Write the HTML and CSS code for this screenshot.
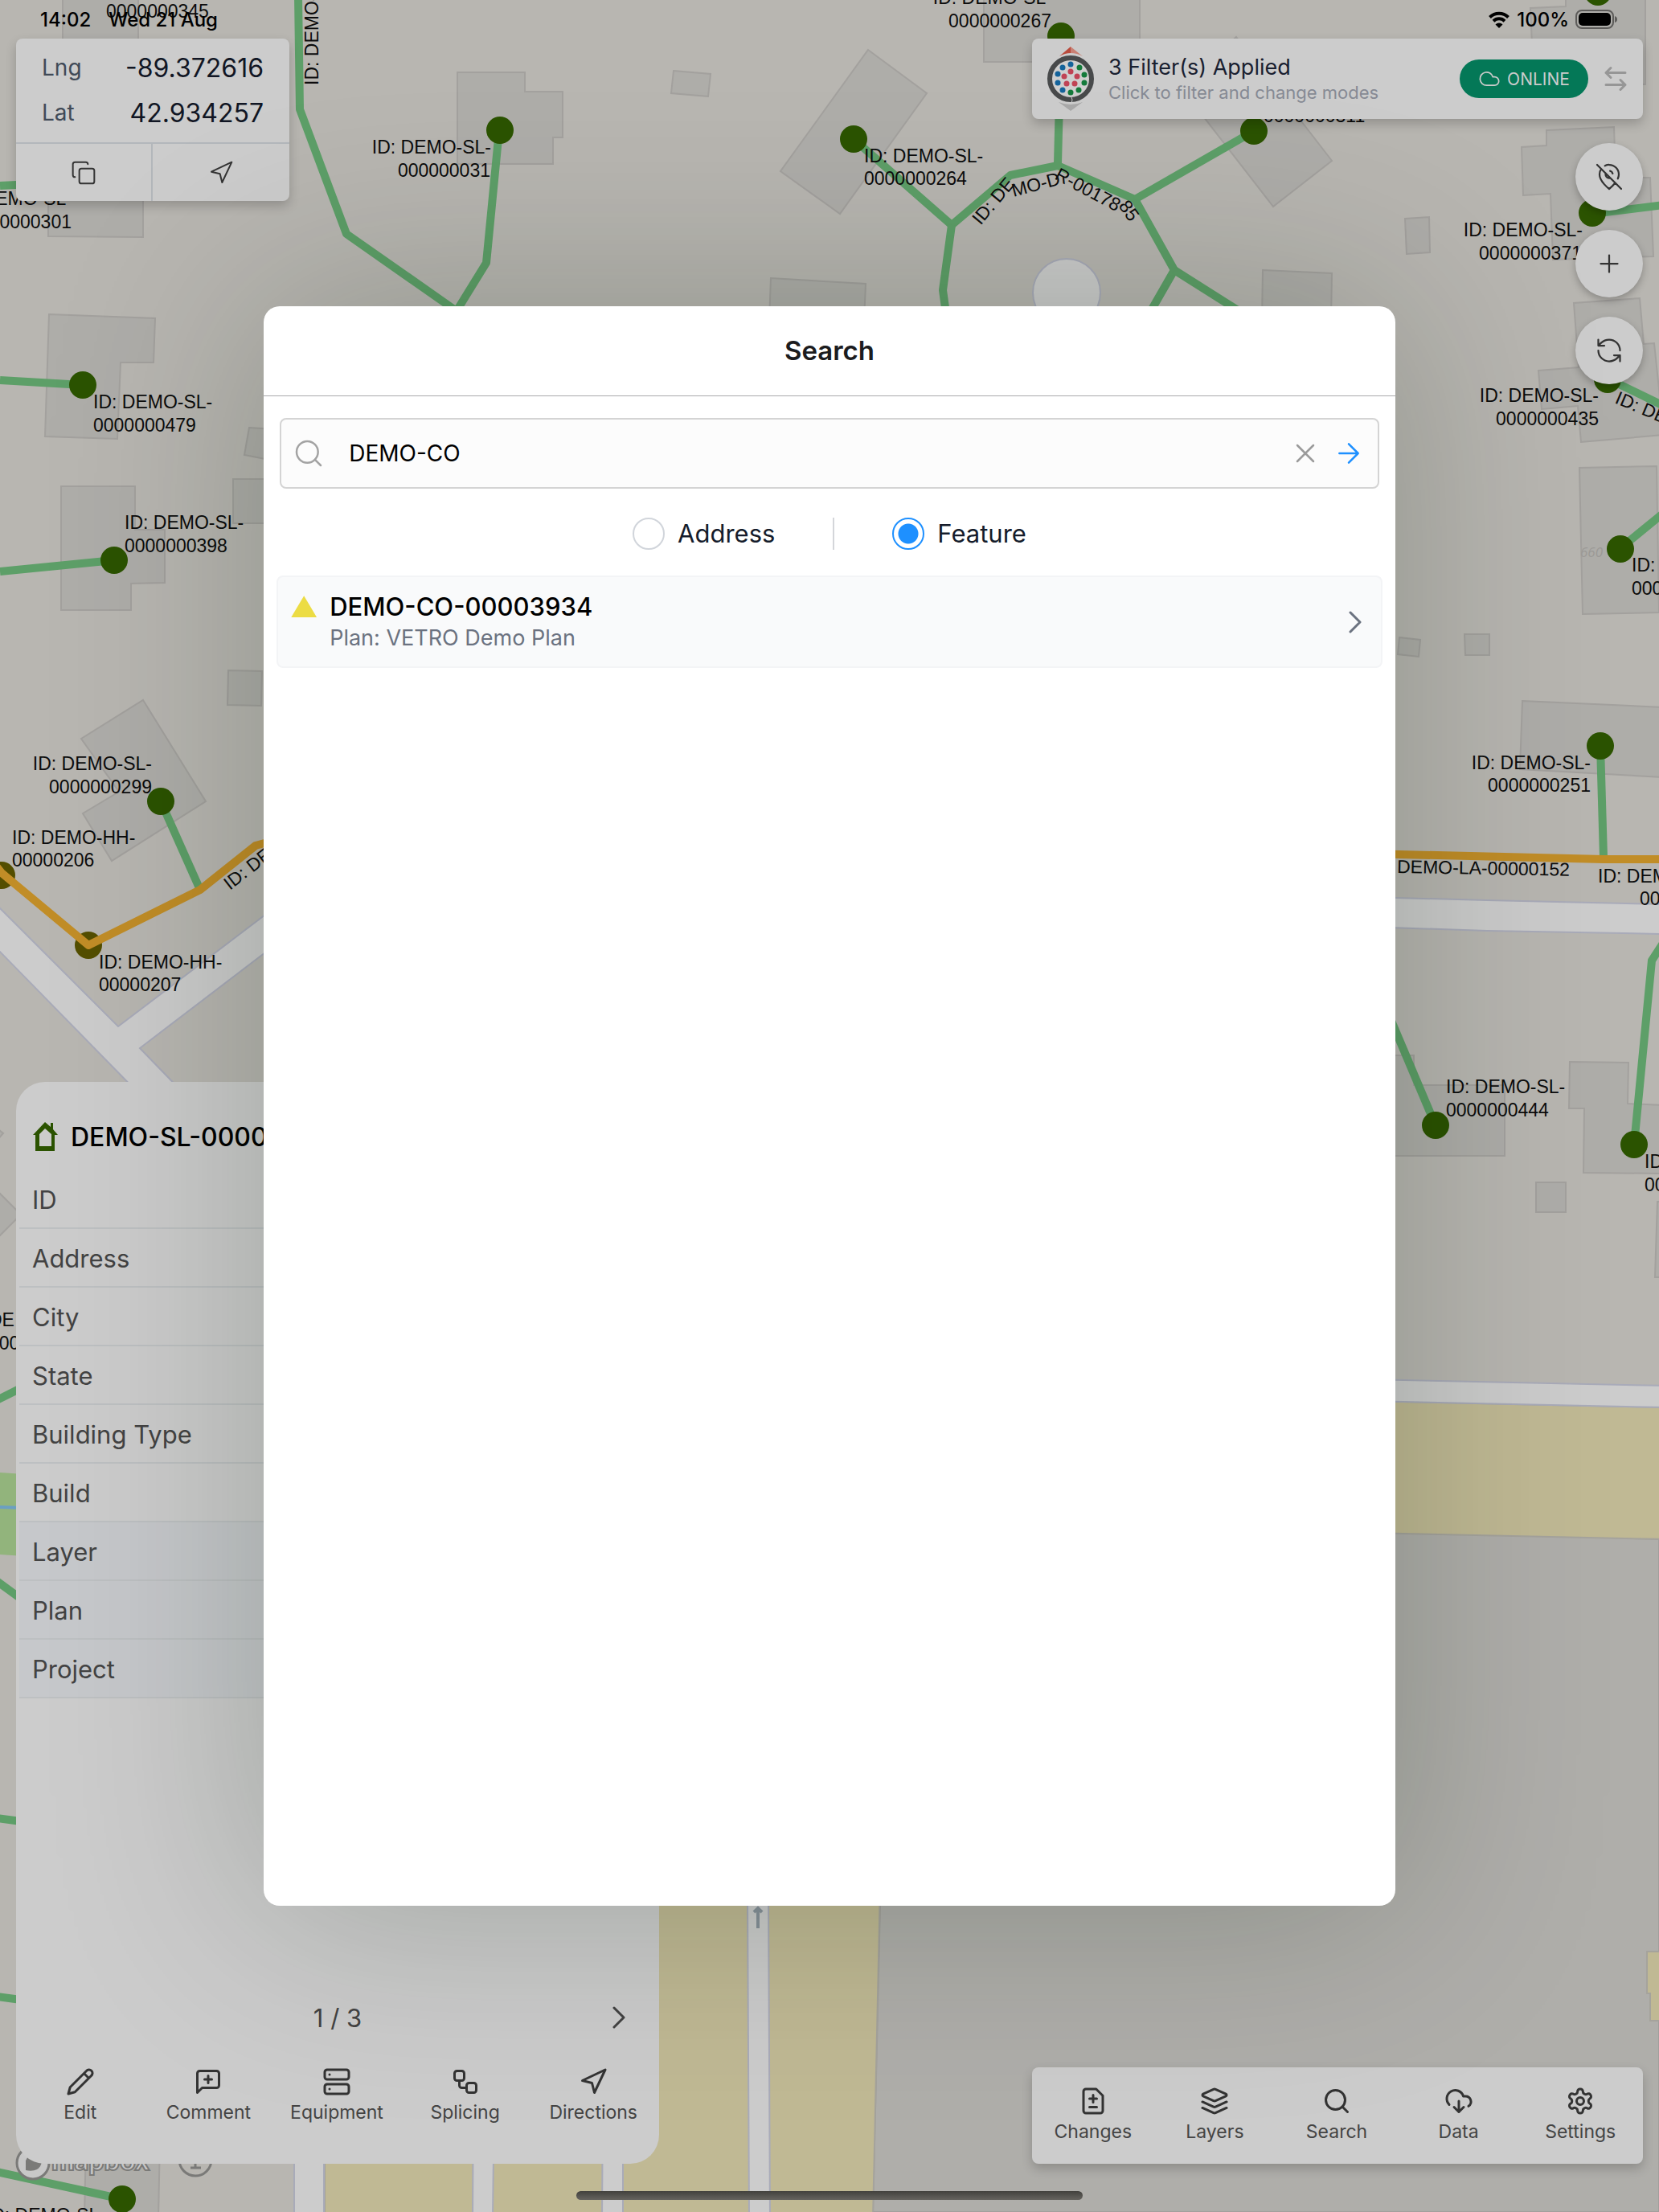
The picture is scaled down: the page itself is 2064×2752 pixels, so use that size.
FILE: index.html
```html
<!DOCTYPE html>
<html lang="en">
<head>
<meta charset="utf-8">
<meta name="viewport" content="width=device-width, initial-scale=1">
<title>Search</title>
<link rel="stylesheet" href="styles.css">
</head>
<body>
<div class="app">
  <svg class="map" viewBox="0 0 2064 2752" preserveAspectRatio="xMidYMid slice" aria-label="Map">
    <rect class="land" width="2064" height="2752"/>
    <!-- land use -->
    <path class="lot" d="M1095 1905H1736L2064 1915V2752H1086L1095 2371Z"/>
    <path class="school" d="M1700 1743L2070 1751V1915L1700 1907Z"/>
    <path class="school" d="M404 2300H1096L1086 2760H404Z"/>
    <path class="school" d="M2049 2428H2070V2514H2053V2480H2049Z"/>
    <path class="park" d="M0 1832L30 1834V1936L0 1934Z"/>
    <path class="river" d="M0 1875L30 1876"/>
    <!-- roads -->
    <path class="road" d="M-4 1126L147 1277L330 1138V1185L174 1304L236 1368H180L-4 1180Z"/>
    <path class="road" d="M1700 1116L1850 1120L2070 1125V1162L1850 1158L1700 1153Z"/>
    <path class="road" d="M1700 1716L2070 1724V1751L1700 1743Z"/>
    <path class="road" d="M366 2600H403V2760H366Z"/>
    <path class="road" d="M589 2600H615L613 2760H588Z"/>
    <path class="road" d="M750 2600H775V2760H749Z"/>
    <path class="road" d="M930 2360H956L958 2760H932Z"/>
    <circle class="road" cx="1327" cy="364" r="42"/>
    <path class="oneway" d="M943 2399V2376M938 2379L943 2374L948 2379"/>
    <!-- buildings -->
    <g class="building">
      <path d="M78 -5H172V110H78Z"/>
      <path d="M569 90H653V114H700V171H688V204H569Z"/>
      <path d="M60 200H178V295L60 294Z"/>
      <path d="M61 391L193 396L191 451H150L146 546L56 543Z"/>
      <path d="M76 605H168V659H205V725L163 726V759H76Z"/>
      <path d="M310 532L340 534V573L304 566Z"/>
      <path d="M290 596H340V651H290Z"/>
      <path d="M284 834L326 835L325 878L283 877Z"/>
      <path d="M178 871L256 997L139 1071L103 1012L148 985L101 919Z"/>
      <path d="M838 88L884 92L881 120L835 116Z"/>
      <path d="M1080 62L1153 116L1045 266L971 213Z"/>
      <path d="M1224 -5H1418V77H1224Z"/>
      <path d="M959 346L1077 353L1075 400H957Z"/>
      <path d="M1571 336L1657 340L1656 400H1570Z"/>
      <path d="M1538 46L1657 200L1584 257L1470 110Z"/>
      <path d="M1748 272L1778 270L1779 314L1750 316Z"/>
      <path d="M1924 162L2008 158L2010 221H2053L2057 319L1932 323L1929 241L1895 243L1893 183L1924 181Z"/>
      <path d="M1904 10L1948 8V-5H2047V105L1908 100Z"/>
      <path d="M1914 461L1964 457L1958 377L2040 371L2045 428L2058 427L2070 541L1967 550L1963 505L1918 509Z"/>
      <path d="M1965 582L2061 580L2064 762L1969 764Z"/>
      <path d="M1741 793L1767 796L1765 817L1739 814Z"/>
      <path d="M1822 789H1853V815H1823Z"/>
      <path d="M1894 872L2070 880V967L1891 957Z"/>
      <path d="M1700 1313H1759V1350H1872V1438H1700Z"/>
      <path d="M1953 1321L2026 1322L2025 1373L2070 1375V1460L1970 1459L1971 1379H1952Z"/>
      <path d="M1911 1471H1948V1508H1911Z"/>
      <path d="M2062 1495H2070V1589H2059Z"/>
      <path d="M-5 1480L26 1511L-5 1542Z"/>
      <path d="M-5 1403L4 1410L-5 1420Z"/>
      <path d="M107 2660H199L197 2760H105Z"/>
    </g>
    <!-- drop cables -->
    <g class="drop">
      <path d="M371 -5L373 136L431 291L568 387L605 327L621 162"/>
      <path d="M0 231L40 229"/>
      <path d="M0 473L103 479"/>
      <path d="M0 711L142 697"/>
      <path d="M200 997L249 1107"/>
      <path d="M1320 45L1316 203"/>
      <path d="M1062 173L1184 280L1257 218L1316 206L1412 248L1461 336L1430 390"/>
      <path d="M1184 280L1173 361L1177 390"/>
      <path d="M1412 248L1560 163"/>
      <path d="M1461 336L1540 386"/>
      <path d="M1981 266L2070 255"/>
      <path d="M2000 471L2070 505"/>
      <path d="M2016 682L2070 638"/>
      <path d="M1991 927L1995 1066"/>
      <path d="M1720 1244L1786 1400"/>
      <path d="M2070 1172L2055 1195L2033 1424"/>
      <path d="M-4 1742L26 1727"/>
      <path d="M-4 1967L26 1989"/>
      <path d="M-4 2262L26 2266"/>
      <path d="M-4 2484L26 2488"/>
      <path d="M-4 2702L152 2736"/>
    </g>
    <g class="hub"><circle cx="2" cy="1089" r="17"/><circle cx="110" cy="1176" r="17"/></g>
    <g class="trunk">
      <path d="M-6 1076L2 1086L110 1176L249 1107L318 1052L340 1046"/>
      <path d="M1700 1062L1995 1069L2070 1069"/>
    </g>
    <g class="node">
      <circle cx="622" cy="162" r="17"/><circle cx="103" cy="479" r="17"/><circle cx="142" cy="697" r="17"/>
      <circle cx="200" cy="997" r="17"/><circle cx="1320" cy="45" r="17"/><circle cx="1062" cy="173" r="17"/>
      <circle cx="1560" cy="163" r="17"/><circle cx="1981" cy="265" r="17"/><circle cx="1988" cy="-10" r="17"/>
      <circle cx="2000" cy="472" r="17"/><circle cx="2016" cy="683" r="17"/><circle cx="1991" cy="928" r="17"/>
      <circle cx="1786" cy="1400" r="17"/><circle cx="2033" cy="1424" r="17"/><circle cx="152" cy="2736" r="17"/>
    </g>
    <!-- labels -->
    <g class="label">
      <text x="132" y="22">0000000345</text>
      <text x="116" y="508">ID: DEMO-SL-</text><text x="116" y="537">0000000479</text>
      <text x="155" y="658">ID: DEMO-SL-</text><text x="155" y="687">0000000398</text>
      <text x="15" y="1050">ID: DEMO-HH-</text><text x="15" y="1078">00000206</text>
      <text x="123" y="1205">ID: DEMO-HH-</text><text x="123" y="1233">00000207</text>
      <text x="1075" y="202">ID: DEMO-SL-</text><text x="1075" y="230">0000000264</text>
      <text x="1572" y="152">0000000311</text>
      <text x="2030" y="711">ID:</text><text x="2030" y="740">000</text>
      <text x="1988" y="1098">ID: DEM</text><text x="2040" y="1126">00</text>
      <text x="1799" y="1360">ID: DEMO-SL-</text><text x="1799" y="1389">0000000444</text>
      <text x="2046" y="1453">ID</text><text x="2046" y="1482">00</text>
      <text x="-14" y="1650">DE</text><text x="-14" y="1679">000</text>
      <text transform="translate(396 106) rotate(-90)">ID: DEMO-</text>
      <text transform="translate(286 1108) rotate(-38)">ID: DE</text>
      <text transform="translate(2008 501) rotate(23)">ID: DE</text>
      <text transform="translate(1738 1086) rotate(1)">DEMO-LA-00000152</text>
      <text transform="translate(1220 281) rotate(-50)">ID: DE</text>
      <text transform="translate(1261 245) rotate(-15)">MO-D</text>
      <text transform="translate(1311 222) rotate(28)">R-00178</text>
      <text transform="translate(1391 256) rotate(55)">85</text>
    </g>
    <g class="label label-end">
      <text x="90" y="255">ID: DEMO-SL-</text><text x="89" y="284">0000000301</text>
      <text x="611" y="191">ID: DEMO-SL-</text><text x="610" y="220">000000031</text>
      <text x="1309" y="5">ID: DEMO-SL-</text><text x="1308" y="34">0000000267</text>
      <text x="1969" y="294">ID: DEMO-SL-</text><text x="1968" y="323">0000000371</text>
      <text x="1989" y="500">ID: DEMO-SL-</text><text x="1989" y="529">0000000435</text>
      <text x="189" y="958">ID: DEMO-SL-</text><text x="189" y="987">0000000299</text>
      <text x="1979" y="957">ID: DEMO-SL-</text><text x="1979" y="985">0000000251</text>
      <text x="131" y="2764">ID: DEMO-SL-</text>
    </g>
    <text class="house-number" x="1966" y="693">660</text>
    <!-- attribution -->
    <g class="brand">
      <circle cx="41" cy="2691" r="20"/>
      <path class="brand-mark" d="M32 2700V2688Q38 2676 48 2682Q56 2692 46 2699Q40 2702 32 2700Z"/>
      <text x="64" y="2700">mapbox</text>
      <circle class="brand-info" cx="243" cy="2687" r="20"/>
      <path class="brand-info" d="M237 2697H250M243 2697V2684H239"/>
    </g>
  </svg>

  <header class="status">
    <div class="status-side"><span>14:02</span><span>Wed 21 Aug</span></div>
    <div class="status-side status-right">
      <svg width="28" height="22" viewBox="0 0 28 22" aria-hidden="true"><path d="M2.500 8.500a16.500 16.500 0 0 1 23 0M7 13.200a10 10 0 0 1 14 0" fill="none" stroke="#000" stroke-width="4"/><path d="M14 22l-4.500-4.600a6.500 6.500 0 0 1 9 0z"/></svg>
      <span>100%</span>
      <svg width="54" height="24" viewBox="0 0 54 24" aria-hidden="true"><rect x="1" y="1" width="46" height="22" rx="7" fill="none" stroke="#5c5b59" stroke-width="2"/><rect x="4" y="4" width="40" height="16" rx="5"/><path d="M49 8q3 1 3 4t-3 4z" fill="#5c5b59"/></svg>
    </div>
  </header>

  <section class="card coords" aria-label="Coordinates">
    <dl class="coords-list">
      <div><dt>Lng</dt><dd>-89.372616</dd></div>
      <div><dt>Lat</dt><dd>42.934257</dd></div>
    </dl>
    <div class="coords-actions">
      <button type="button" aria-label="Copy"><svg class="icon icon-sm" viewBox="0 0 24 24"><rect x="8" y="8" width="14" height="14" rx="2"/><path d="M4 16c-1.100 0-2-.9-2-2V4c0-1.100.9-2 2-2h10c1.100 0 2 .9 2 2"/></svg></button>
      <button type="button" aria-label="Navigate"><svg class="icon icon-sm" viewBox="0 0 24 24"><path d="M3 11l19-9-9 19-2-8z"/></svg></button>
    </div>
  </section>

  <section class="card filter">
    <svg class="logo" width="64" height="84" viewBox="10 6 64 84" aria-hidden="true">
      <path d="M42 8L28 20Q35 16 42 16Z" fill="#b94a3c"/><path d="M42 8L57 20Q50 16 42 16Z" fill="#c98074"/>
      <path d="M27 77Q42 83 57 77L42 88Z" fill="#a9a9a9"/>
      <circle cx="42" cy="48" r="26" fill="#cfcfcf" stroke="#484a4b" stroke-width="6"/>
      <path d="M43 71q2 3 0 7" fill="none" stroke="#ccc" stroke-width="1"/>
      <g fill="#14639b"><circle cx="42" cy="30" r="3.500"/><circle cx="32" cy="34" r="3.500"/><circle cx="26" cy="42" r="3.500"/><circle cx="26" cy="53" r="3.500"/><circle cx="32" cy="62" r="3.500"/></g>
      <g fill="#147a3b"><circle cx="53" cy="34" r="3.500"/><circle cx="59" cy="43" r="3.500"/><circle cx="59" cy="53" r="3.500"/><circle cx="52" cy="62" r="3.500"/><circle cx="42" cy="65" r="3.500"/></g>
      <g fill="#c04355"><circle cx="42" cy="39" r="3.500"/><circle cx="50" cy="45" r="3.500"/><circle cx="47" cy="54" r="3.500"/><circle cx="37" cy="54" r="3.500"/><circle cx="34" cy="45" r="3.500"/></g>
    </svg>
    <div class="filter-text"><strong>3 Filter(s) Applied</strong><span>Click to filter and change modes</span></div>
    <button type="button" class="online"><svg class="icon icon-xs" viewBox="0 0 24 24"><path d="M17.500 19H9a7 7 0 1 1 6.710-9h1.790a4.500 4.500 0 1 1 0 9Z"/></svg>ONLINE</button>
    <button type="button" class="swap" aria-label="Switch mode"><svg class="icon" viewBox="0 0 24 24"><path d="M8 3 4 7l4 4M4 7h16M16 21l4-4-4-4M20 17H4"/></svg></button>
  </section>

  <nav class="tools" aria-label="Map tools">
    <button type="button" aria-label="Location off"><svg class="icon" viewBox="0 0 24 24"><path d="M5.430 5.430A8.060 8.060 0 0 0 4 10c0 6 8 12 8 12a29.940 29.940 0 0 0 5-5M19.180 13.520A8.660 8.660 0 0 0 20 10a8 8 0 0 0-8-8 7.880 7.880 0 0 0-3.520.820M9.130 9.130A2.780 2.780 0 0 0 9 10a3 3 0 0 0 3 3 2.780 2.780 0 0 0 .870-.130M14.900 9.250a3 3 0 0 0-2.150-2.160M2 2l20 20"/></svg></button>
    <button type="button" aria-label="Add"><svg class="icon" viewBox="0 0 24 24"><path d="M5 12h14M12 5v14"/></svg></button>
    <button type="button" aria-label="Refresh"><svg class="icon" viewBox="0 0 24 24"><path d="M21 12a9 9 0 0 0-9-9 9.750 9.750 0 0 0-6.740 2.740L3 8M3 3v5h5M3 12a9 9 0 0 0 9 9 9.750 9.750 0 0 0 6.740-2.740L21 16M16 16h5v5"/></svg></button>
  </nav>

  <aside class="panel">
    <h2><svg width="32" height="36" viewBox="0 0 32 36" aria-hidden="true"><path fill="#2b5300" fill-rule="evenodd" d="M15 0L22 6V1H25V9L31 16H27V36H3V16H0ZM15 8L8 15V30H23V15Z"/></svg>DEMO-SL-0000</h2>
    <table>
      <tbody>
        <tr><th scope="row">ID</th></tr>
        <tr><th scope="row">Address</th></tr>
        <tr><th scope="row">City</th></tr>
        <tr><th scope="row">State</th></tr>
        <tr><th scope="row">Building Type</th></tr>
        <tr><th scope="row">Build</th></tr>
        <tr class="tinted"><th scope="row">Layer</th></tr>
        <tr class="tinted"><th scope="row">Plan</th></tr>
        <tr class="tinted"><th scope="row">Project</th></tr>
      </tbody>
    </table>
    <div class="pager"><span>1 / 3</span><button type="button" aria-label="Next"><svg class="icon icon-lg" viewBox="0 0 24 24"><path d="m9 18 6-6-6-6"/></svg></button></div>
    <nav class="tabs">
      <button type="button"><svg class="icon" viewBox="0 0 24 24"><path d="M17 3a2.850 2.830 0 1 1 4 4L7.500 20.500 2 22l1.500-5.500ZM15 5l4 4"/></svg>Edit</button>
      <button type="button"><svg class="icon" viewBox="0 0 24 24"><path d="M21 15a2 2 0 0 1-2 2H7l-4 4V5a2 2 0 0 1 2-2h14a2 2 0 0 1 2 2zM12 7v6M9 10h6"/></svg>Comment</button>
      <button type="button"><svg class="icon" viewBox="0 0 24 24"><rect x="2" y="2" width="20" height="8" rx="2"/><rect x="2" y="14" width="20" height="8" rx="2"/><path d="M6 6h.01M6 18h.01"/></svg>Equipment</button>
      <button type="button"><svg class="icon" viewBox="0 0 24 24"><rect x="3" y="3" width="8" height="8" rx="2"/><path d="M7 11v4a2 2 0 0 0 2 2h4"/><rect x="13" y="13" width="8" height="8" rx="2"/></svg>Splicing</button>
      <button type="button"><svg class="icon" viewBox="0 0 24 24"><path d="M3 11l19-9-9 19-2-8z"/></svg>Directions</button>
    </nav>
  </aside>

  <nav class="card tabs menu">
    <button type="button"><svg class="icon" viewBox="0 0 24 24"><path d="M14.500 2H6a2 2 0 0 0-2 2v16a2 2 0 0 0 2 2h12a2 2 0 0 0 2-2V7.500L14.500 2zM12 13V7M9 10h6M9 17h6"/></svg>Changes</button>
    <button type="button"><svg class="icon" viewBox="0 0 24 24"><path d="m12.830 2.180a2 2 0 0 0-1.660 0L2.600 6.080a1 1 0 0 0 0 1.830l8.580 3.910a2 2 0 0 0 1.660 0l8.580-3.900a1 1 0 0 0 0-1.830ZM22 17.650l-9.170 4.160a2 2 0 0 1-1.660 0L2 17.650M22 12.650l-9.170 4.160a2 2 0 0 1-1.660 0L2 12.650"/></svg>Layers</button>
    <button type="button"><svg class="icon" viewBox="0 0 24 24"><circle cx="11" cy="11" r="8"/><path d="m21 21-4.300-4.300"/></svg>Search</button>
    <button type="button"><svg class="icon" viewBox="0 0 24 24"><path d="M4 14.899A7 7 0 1 1 15.710 8h1.790a4.500 4.500 0 0 1 2.500 8.242M12 12v9M8 17l4 4 4-4"/></svg>Data</button>
    <button type="button"><svg class="icon" viewBox="0 0 24 24"><path d="M12.220 2h-.440a2 2 0 0 0-2 2v.180a2 2 0 0 1-1 1.730l-.430.250a2 2 0 0 1-2 0l-.150-.080a2 2 0 0 0-2.730.730l-.220.380a2 2 0 0 0 .730 2.730l.150.100a2 2 0 0 1 1 1.720v.510a2 2 0 0 1-1 1.740l-.150.090a2 2 0 0 0-.730 2.730l.220.380a2 2 0 0 0 2.730.730l.150-.080a2 2 0 0 1 2 0l.430.250a2 2 0 0 1 1 1.730V20a2 2 0 0 0 2 2h.440a2 2 0 0 0 2-2v-.180a2 2 0 0 1 1-1.730l.430-.250a2 2 0 0 1 2 0l.150.080a2 2 0 0 0 2.730-.730l.220-.390a2 2 0 0 0-.730-2.730l-.150-.080a2 2 0 0 1-1-1.740v-.500a2 2 0 0 1 1-1.740l.150-.090a2 2 0 0 0 .730-2.730l-.220-.380a2 2 0 0 0-2.730-.730l-.150.080a2 2 0 0 1-2 0l-.430-.250a2 2 0 0 1-1-1.730V4a2 2 0 0 0-2-2z"/><circle cx="12" cy="12" r="3"/></svg>Settings</button>
  </nav>

  <div class="overlay">
    <section class="modal" role="dialog" aria-labelledby="modal-title">
      <h1 id="modal-title">Search</h1>
      <form class="modal-body">
        <div class="search-box">
          <svg class="icon search-icon" viewBox="0 0 24 24"><circle cx="11" cy="11" r="8"/><path d="m21 21-4.300-4.300"/></svg>
          <input type="text" value="DEMO-CO" aria-label="Search term">
          <button type="button" class="clear" aria-label="Clear"><svg class="icon" viewBox="0 0 24 24"><path d="M18 6 6 18M6 6l12 12"/></svg></button>
          <button type="button" class="go" aria-label="Go"><svg class="icon" viewBox="0 0 24 24"><path d="M5 12h14M12 5l7 7-7 7"/></svg></button>
        </div>
        <fieldset class="kinds">
          <label><input type="radio" name="kind">Address</label>
          <span class="rule"></span>
          <label><input type="radio" name="kind" checked>Feature</label>
        </fieldset>
        <button type="button" class="result">
          <span class="triangle"></span>
          <span class="result-text"><strong>DEMO-CO-00003934</strong><span>Plan: VETRO Demo Plan</span></span>
          <svg class="icon icon-lg" viewBox="0 0 24 24"><path d="m9 18 6-6-6-6"/></svg>
        </button>
      </form>
    </section>
  </div>
  <div class="home"></div>
</div>
</body>
</html>
```
FILE: styles.css
```css
* { box-sizing: border-box; }
body { margin: 0; font-family: Inter, "Liberation Sans", sans-serif; color: #000; }
h1, h2, dl, dd, fieldset { margin: 0; }
button { padding: 0; border: 0; background: none; color: inherit; font: inherit; }
svg { flex: none; }

.app { position: relative; min-height: 100vh; overflow: hidden; background: #b8b6b1; }

/* Map */
.map { position: absolute; inset: 0; width: 100%; height: 100%; }
.land { fill: #b8b6b1; }
.lot { fill: #afaeaa; stroke: #a19f9c; stroke-width: 2; }
.school { fill: #c0b994; stroke: #a5a39c; stroke-width: 2; }
.park { fill: #92b47c; }
.river { stroke: #6b9fc2; stroke-width: 4; }
.road { fill: #cccccc; stroke: #a9abb9; stroke-width: 2; }
.oneway { fill: none; stroke: #87919a; stroke-width: 4; }
.building { fill: #aeada9; stroke: #a3a19e; stroke-width: 2; }
.drop { fill: none; stroke: #5d9f68; stroke-width: 10; stroke-linejoin: round; }
.trunk { fill: none; stroke: #c18d27; stroke-width: 10; stroke-linejoin: round; }
.hub { fill: #534e00; }
.node { fill: #2b5300; }
.label { font: 23px "Liberation Sans", Arial, sans-serif; fill: #0c0c0c; }
.label-end { text-anchor: end; }
.house-number { font: italic 17px "Open Sans", sans-serif; fill: #9c9a97; }
.brand { fill: #c8c8c8; stroke: #7a7a78; stroke-width: 3; }
.brand text { font: 900 34px Lato, sans-serif; stroke-width: 2; }
.brand .brand-mark { fill: #7a7a78; stroke: none; }
.brand .brand-info { fill: none; }

/* Icons */
.icon { width: 36px; height: 36px; fill: none; stroke: currentColor; stroke-width: 2; stroke-linecap: round; stroke-linejoin: round; }
.icon-xs { width: 28px; height: 28px; }
.icon-sm { width: 32px; height: 32px; }
.icon-lg { width: 48px; height: 48px; }
.coords .icon, .tools .icon, .online .icon, .icon-lg, .search-box .icon { stroke-width: 1.5; }

/* Status bar */
.status { position: relative; display: flex; justify-content: space-between; align-items: center; height: 48px; padding: 0 50px; font-size: 24px; font-weight: 500; }
.status-side { display: flex; align-items: center; gap: 22px; }
.status-right { gap: 8px; }

/* Floating cards */
.card { position: absolute; border-radius: 8px; background: #cccccc; box-shadow: 0 6px 14px rgba(0, 0, 0, 0.2); }
.coords { top: 48px; left: 20px; width: 340px; }
.coords-list { padding: 8px 32px 9px; }
.coords-list div { display: flex; justify-content: space-between; align-items: center; height: 56px; }
.coords-list dt { font-size: 28px; color: #414a57; }
.coords-list dd { font-size: 32px; color: #111624; }
.coords-actions { display: grid; grid-template-columns: 1fr 1fr; height: 73px; border-top: 2px solid #b3b7bb; color: #333; }
.coords-actions button { display: grid; place-items: center; }
.coords-actions button:first-child { border-right: 2px solid #b3b7bb; }

.filter { top: 48px; right: 20px; display: flex; align-items: center; width: 760px; height: 100px; padding: 0 16px; }
.filter-text { flex: 1; display: flex; flex-direction: column; margin-left: 15px; font-size: 22px; line-height: 28px; color: #868a94; }
.filter-text strong { font-size: 27px; font-weight: 400; line-height: 34px; color: #192030; }
.online { display: flex; justify-content: center; align-items: center; gap: 8px; width: 160px; height: 48px; margin-right: 16px; border-radius: 24px; background: #047857; color: #cccccc; font-size: 21px; }
.swap { display: grid; color: #969696; }

.tools { position: absolute; top: 178px; right: 20px; display: grid; gap: 24px; }
.tools button { display: grid; place-items: center; width: 84px; height: 84px; border-radius: 50%; background: #cccccc; color: #333; box-shadow: 0 4px 10px rgba(0, 0, 0, 0.25); }

/* Feature panel */
.panel { position: absolute; left: 20px; bottom: 60px; display: flex; flex-direction: column; width: 800px; height: 1346px; max-height: 100vh; padding: 26px 0 48px; border-radius: 36px; background: #cccccc; color: #434343; }
.panel h2 { display: flex; align-items: center; gap: 15px; height: 84px; padding-left: 21px; font-size: 32px; font-weight: 500; color: #000; }
.panel table { margin: 0 4px; border-spacing: 0; }
.panel th { height: 73px; padding: 2px 16px 0; border-bottom: 2px solid #bdc0c2; font-size: 31px; font-weight: 400; text-align: left; }
.tinted { background: #c6c8cb; }
.pager { position: relative; display: grid; place-items: center; height: 64px; margin-top: auto; font-size: 31px; }
.pager button { position: absolute; top: 8px; right: 26px; display: grid; }
.tabs { display: grid; grid-template-columns: repeat(5, 1fr); color: #444; font-size: 23px; line-height: 32px; }
.tabs button { display: grid; justify-items: center; gap: 4px; }
.tabs .icon { color: #333; }
.panel .tabs { padding: 30px 2px 0 0; }
.menu { right: 20px; bottom: 60px; width: 760px; height: 120px; padding: 24px 2px 0 0; align-content: start; }

/* Search dialog */
.overlay { position: absolute; inset: 0; display: grid; place-items: center; }
.modal { width: 68.2vw; height: 72.3vh; border-radius: 20px; background: #fff; box-shadow: 0 0 260px 10px rgba(0, 24, 0, 0.22); }
.modal h1 { height: 112px; border-bottom: 1px solid #a9a9ac; font-size: 33px; font-weight: 600; line-height: 111px; text-align: center; color: #1c1c1e; }
.modal-body { padding: 27px 16px; }
.search-box { display: flex; align-items: center; height: 88px; margin: 0 4px; padding: 0 16px 0 14px; border: 2px solid #d4d4d4; border-radius: 8px; background: #fcfcfc; }
.search-box .icon { width: 40px; height: 40px; }
.search-icon { color: #a3a3a3; }
.search-box input { flex: 1; min-width: 0; margin-left: 30px; padding: 0; border: 0; outline: 0; background: none; font: 28px Inter, sans-serif; color: #000; }
.search-box button { display: grid; margin-left: 14px; }
.clear { color: #9b9b9b; }
.go { color: #1e90ff; }
.kinds { display: flex; justify-content: center; align-items: center; gap: 72px; padding: 36px 0 32px; border: 0; }
.kinds label { display: flex; align-items: center; gap: 16px; font-size: 31px; line-height: 40px; color: #151c2b; }
.kinds input { appearance: none; width: 40px; height: 40px; margin: 0; border: 2px solid #d1d5db; border-radius: 50%; background: #fff; }
.kinds input:checked { border-color: #1e90ff; background: radial-gradient(circle, #1e90ff 12px, #fff 13px); }
.rule { width: 2px; height: 40px; background: #d4d6da; }
.result { display: flex; align-items: center; width: 100%; height: 115px; padding: 0 8px 0 16px; border: 2px solid #f3f4f6; border-radius: 8px; background: #f9fafb; color: #6b7280; text-align: left; }
.triangle { align-self: flex-start; width: 32px; height: 27px; margin: 23px 16px 0 0; background: #ecdc44; clip-path: polygon(50% 0, 100% 100%, 0 100%); }
.result-text { flex: 1; display: flex; flex-direction: column; font-size: 27px; line-height: 38px; }
.result-text strong { font-size: 31px; font-weight: 500; line-height: 40px; color: #000; }

.home { position: absolute; bottom: 15px; left: 50%; width: 630px; height: 11px; margin-left: -315px; border-radius: 6px; background: linear-gradient(#42413d, #66645f); }
```
